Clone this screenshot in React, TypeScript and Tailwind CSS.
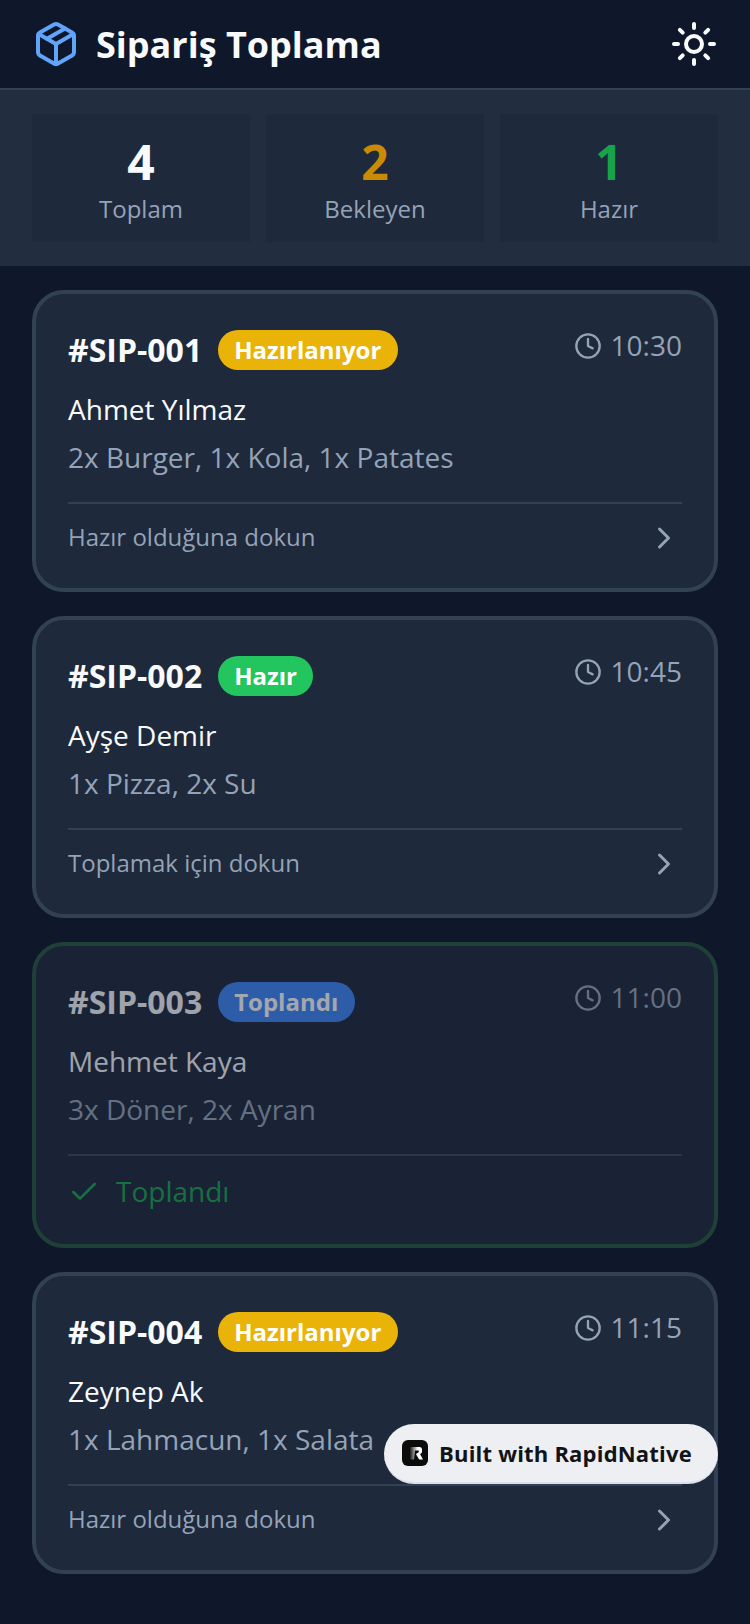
import React from "react";

const font = { fontFamily: '"Open Sans", sans-serif' };

function Clock({ className }: { className: string }) {
  return (
    <svg viewBox="0 0 24 24" fill="none" stroke="currentColor" strokeWidth="2" strokeLinecap="round" strokeLinejoin="round" className={className}>
      <circle cx="12" cy="12" r="10" />
      <path d="M12 6v6l4 2" />
    </svg>
  );
}

function Chevron() {
  return (
    <svg viewBox="0 0 24 24" fill="none" stroke="currentColor" strokeWidth="2" strokeLinecap="round" strokeLinejoin="round" className="w-9 h-9 text-[#94a3b8]">
      <path d="m9 18 6-6-6-6" />
    </svg>
  );
}

type Order = {
  id: string;
  status: string;
  badge: string;
  time: string;
  name: string;
  items: string;
  hint?: string;
  done?: boolean;
};

const orders: Order[] = [
  { id: "#SIP-001", status: "Hazırlanıyor", badge: "bg-[#eab308]", time: "10:30", name: "Ahmet Yılmaz", items: "2x Burger, 1x Kola, 1x Patates", hint: "Hazır olduğuna dokun" },
  { id: "#SIP-002", status: "Hazır", badge: "bg-[#22c55e]", time: "10:45", name: "Ayşe Demir", items: "1x Pizza, 2x Su", hint: "Toplamak için dokun" },
  { id: "#SIP-003", status: "Toplandı", badge: "bg-[#3b82f6]", time: "11:00", name: "Mehmet Kaya", items: "3x Döner, 2x Ayran", done: true },
  { id: "#SIP-004", status: "Hazırlanıyor", badge: "bg-[#eab308]", time: "11:15", name: "Zeynep Ak", items: "1x Lahmacun, 1x Salata", hint: "Hazır olduğuna dokun" },
];

function Card({ o }: { o: Order }) {
  return (
    <div className={`rounded-[32px] border-[4px] ${o.done ? "border-[#1f4037] bg-[#1a2335]" : "border-[#334155] bg-[#1e293b]"}`}>
      <div className={`flex flex-col px-8 pt-[36px] pb-8 ${o.done ? "opacity-60" : ""}`}>
        <div className="flex justify-between items-start h-[40px]">
          <div className="flex items-center gap-4">
            <span className="text-[32px] leading-[40px] font-bold text-[#f8fafc]">{o.id}</span>
            <span className={`${o.badge} h-[40px] rounded-full pl-4 pr-[16.5px] flex items-center text-[24px] font-bold text-white`}>{o.status}</span>
          </div>
          <div className="flex items-center gap-[9px] text-[#94a3b8] h-[32px]">
            <Clock className="w-7 h-7" />
            <span className="text-[28px] leading-[30px] pb-[2px]">{o.time}</span>
          </div>
        </div>
        <div className="mt-[19px] text-[28px] leading-[40px] text-[#f8fafc]">{o.name}</div>
        <div className="mt-2 text-[28px] leading-[40px] text-[#94a3b8]">{o.items}</div>
        <div className="mt-[25px] border-t-2 border-[#334155] pt-4">
          {o.done ? (
            <div className="flex items-center gap-4 text-[#16a34a]">
              <svg viewBox="0 0 24 24" fill="none" stroke="currentColor" strokeWidth="2" strokeLinecap="round" strokeLinejoin="round" className="w-8 h-8">
                <path d="M20 6 9 17l-5-5" />
              </svg>
              <span className="text-[28px] leading-[38px] pb-[2px]">Toplandı</span>
            </div>
          ) : (
            <div className="flex items-center justify-between">
              <span className="text-[24px] leading-[34px] pb-[2px] text-[#94a3b8]">{o.hint}</span>
              <Chevron />
            </div>
          )}
        </div>
      </div>
    </div>
  );
}

function Stat({ value, label, color }: { value: string; label: string; color: string }) {
  return (
    <div className="flex-1 bg-[#1e293b] h-[128px] pt-[2px] flex flex-col items-center justify-center">
      <div className={`text-[48px] leading-[56px] font-bold ${color}`}>{value}</div>
      <div className="mt-[3px] text-[24px] leading-[32px] text-[#94a3b8]">{label}</div>
    </div>
  );
}

export default function App() {
  return (
    <div style={font} className="w-[750px] min-h-[1624px] bg-[#0f172a] relative overflow-hidden">
      <header className="h-[90px] border-b-2 border-[#334155] flex items-center justify-between px-8">
        <div className="flex items-center gap-4">
          <svg viewBox="0 0 24 24" fill="none" stroke="#60a5fa" strokeWidth="2" strokeLinecap="round" strokeLinejoin="round" className="w-12 h-12">
            <path d="M21 8a2 2 0 0 0-1-1.73l-7-4a2 2 0 0 0-2 0l-7 4A2 2 0 0 0 3 8v8a2 2 0 0 0 1 1.73l7 4a2 2 0 0 0 2 0l7-4A2 2 0 0 0 21 16Z" />
            <path d="m3.3 7 8.7 5 8.7-5" />
            <path d="M12 22V12" />
            <path d="m16.5 4.27-9 5.15" />
          </svg>
          <span className="text-[36px] leading-[48px] pt-[2px] font-bold text-[#f8fafc]">Sipariş Toplama</span>
        </div>
        <svg viewBox="0 0 24 24" fill="none" stroke="#f8fafc" strokeWidth="2" strokeLinecap="round" strokeLinejoin="round" className="w-12 h-12">
          <circle cx="12" cy="12" r="4" />
          <path d="M12 2v2" /><path d="M12 20v2" /><path d="m4.93 4.93 1.41 1.41" /><path d="m17.66 17.66 1.41 1.41" /><path d="M2 12h2" /><path d="M20 12h2" /><path d="m6.34 17.66-1.41 1.41" /><path d="m19.07 4.93-1.41 1.41" />
        </svg>
      </header>
      <section className="h-[176px] bg-[#222d40] flex items-center gap-4 px-8">
        <Stat value="4" label="Toplam" color="text-[#f8fafc]" />
        <Stat value="2" label="Bekleyen" color="text-[#ca8a04]" />
        <Stat value="1" label="Hazır" color="text-[#16a34a]" />
      </section>
      <main className="px-8 pt-6 flex flex-col gap-6">
        {orders.map((o) => (
          <Card key={o.id} o={o} />
        ))}
      </main>
      <div className="absolute left-[384px] top-[1424px] w-[334px] h-[60px] rounded-full bg-[#eeeff3] border-b-2 border-[#dbe1ea] flex items-center pl-[18px] gap-[11px]">
        <svg viewBox="0 0 26 26" className="w-[26px] h-[26px]">
          <defs>
            <linearGradient id="rn" x1="0" y1="0" x2="1" y2="0">
              <stop offset="0" stopColor="#1a1a1a" />
              <stop offset="0.6" stopColor="#ffffff" />
            </linearGradient>
          </defs>
          <rect width="26" height="26" rx="6" fill="#0b0b0b" />
          <path d="M8 7h9.5a2.5 2.5 0 0 1 2.5 2.5v2.2a2.5 2.5 0 0 1-2 2.4l3 5.4h-3.8l-3.4-5.6 3-1.6v-1.8H13L12 19.500H8Z" fill="url(#rn)" />
        </svg>
        <span className="text-[22px] font-bold text-[#111318] tracking-[0.2px]">Built with RapidNative</span>
      </div>
    </div>
  );
}
